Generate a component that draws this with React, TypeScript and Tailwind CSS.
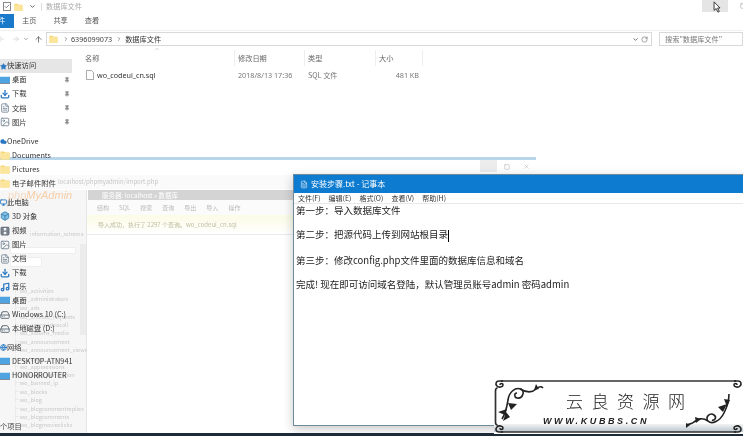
import React from "react";
import { ArrowLeft, ArrowRight, ArrowUp, ChevronDown, ChevronRight, ChevronUp, RotateCw, Pin, Star, Download, FileText, Image, Cloud, Monitor, Box, Film, Music, HardDrive, Globe, Check, Square, X } from "lucide-react";

const font = { fontFamily: '"Noto Sans CJK SC","Noto Sans",sans-serif' };

function FolderIcon({ className = "" }: { className?: string }) {
  return (
    <svg viewBox="0 0 10 10" className={className}>
      <path d="M0.5 1.5h3.5l1 1h4.5v7h-9z" fill="#f7d673" />
      <path d="M0.5 3h9v6.5h-9z" fill="#fbe49c" />
    </svg>
  );
}

function Screen({ className = "" }: { className?: string }) {
  return (
    <svg viewBox="0 0 12 10" className={className}>
      <rect x="0" y="0.5" width="12" height="7.5" fill="#4fa3e0" />
      <rect x="0" y="8" width="12" height="1.2" fill="#7d8b96" />
    </svg>
  );
}

type Row = { icon: React.ReactNode; label: string; pin?: boolean; head?: boolean; active?: boolean; gapTop?: string };

const sideRows: Row[] = [
  { icon: <Star className="w-[7px] h-[7px] fill-[#2b79c2] text-[#2b79c2]" />, label: "快速访问", head: true, active: true },
  { icon: <Screen className="w-[10px] h-[9px]" />, label: "桌面", pin: true },
  { icon: <Download className="w-[10px] h-[10px] text-[#2b79c2]" strokeWidth={3} />, label: "下载", pin: true },
  { icon: <FileText className="w-[10px] h-[10px] text-[#6d8192]" />, label: "文档", pin: true },
  { icon: <Image className="w-[10px] h-[10px] text-[#6d8192]" />, label: "图片", pin: true },
  { icon: <Cloud className="w-[7px] h-[7px] fill-[#2b79c2] text-[#2b79c2]" />, label: "OneDrive", head: true, gapTop: "mt-[5px]" },
  { icon: <FolderIcon className="w-[10px] h-[10px]" />, label: "Documents" },
  { icon: <FolderIcon className="w-[10px] h-[10px]" />, label: "Pictures" },
  { icon: <FolderIcon className="w-[10px] h-[10px]" />, label: "电子邮件附件" },
  { icon: <Monitor className="w-[7px] h-[7px] text-[#2b79c2]" strokeWidth={3} />, label: "此电脑", head: true, gapTop: "mt-[5px]" },
  { icon: <Box className="w-[10px] h-[10px] fill-[#7cc0e8] text-[#3b7ea8]" />, label: "3D 对象" },
  { icon: <Film className="w-[10px] h-[10px] text-[#6b7480]" strokeWidth={3} />, label: "视频" },
  { icon: <Image className="w-[10px] h-[10px] text-[#6d8192]" />, label: "图片" },
  { icon: <FileText className="w-[10px] h-[10px] text-[#6d8192]" />, label: "文档" },
  { icon: <Download className="w-[10px] h-[10px] text-[#2b79c2]" strokeWidth={3} />, label: "下载" },
  { icon: <Music className="w-[10px] h-[10px] text-[#2b79c2]" strokeWidth={3} />, label: "音乐" },
  { icon: <Screen className="w-[10px] h-[9px]" />, label: "桌面" },
  { icon: <HardDrive className="w-[10px] h-[10px] text-[#4b5b68]" />, label: "Windows 10 (C:)" },
  { icon: <HardDrive className="w-[10px] h-[10px] text-[#4b5b68]" />, label: "本地磁盘 (D:)" },
  { icon: <Globe className="w-[7px] h-[7px] text-[#2b79c2]" strokeWidth={3} />, label: "网络", head: true, gapTop: "mt-[5px]" },
  { icon: <Screen className="w-[10px] h-[9px]" />, label: "DESKTOP-ATN941" },
  { icon: <Screen className="w-[10px] h-[9px]" />, label: "HONORROUTER" },
];

const treeItems: [number, string][] = [
  [292, "wo_activities"],
  [300, "wo_administrators"],
  [309, "wo_ads"],
  [318, "wo_affiliate_requests"],
  [326, "wo_agoravideocall"],
  [334, "wo_albums_media"],
  [343, "wo_announcement"],
  [351, "wo_announcement_views"],
  [360, "wo_apps"],
  [368, "wo_appssessions"],
  [376, "wo_apps_permission"],
  [384, "wo_banned_ip"],
  [393, "wo_blocks"],
  [401, "wo_blog"],
  [410, "wo_blogcommentreplies"],
  [418, "wo_blogcomments"],
  [426, "wo_blogmovieclicks"],
];

function Stamp() {
  return (
    <div className="absolute left-[494px] top-[379px] w-[249px] h-[55px] bg-white z-30 overflow-hidden">
      <div className="absolute left-0 right-0 bottom-[2px] h-[8px] bg-gradient-to-b from-[#f2f4f5] to-[#b8c4cc]" />
      <svg viewBox="0 0 249 55" className="absolute inset-0 w-full h-full">
        {/* frame */}
        <path d="M7 2H242M7 53H242M1.500 12V43" fill="none" stroke="#333" strokeWidth="1.7" />
        {/* corner curls */}
        <path d="M9 2H5C2 2 1 5 3 7c2 2 6 1 6-1 0-2-3-2-3 0M1.500 12c0-2 1-3 2-3" fill="none" stroke="#222" strokeWidth="1.6" />
        <path d="M9 53H5c-3 0-4-3-2-5s6-1 6 1c0 2-3 2-3 0M1.500 43c0 2 1 3 2 3" fill="none" stroke="#222" strokeWidth="1.6" />
        <path d="M240 2h4c3 0 4 3 2 5s-6 1-6-1c0-2 3-2 3 0" fill="none" stroke="#222" strokeWidth="1.6" />
        <path d="M240 53h4c3 0 4-3 2-5s-6-1-6 1c0 2 3 2 3 0" fill="none" stroke="#222" strokeWidth="1.6" />
        {/* left ornament */}
        <path d="M8 40C12 34 13 27 14 21 15 13 21 8 27 10 31 12 29 20 23 19 20 18 20 14 23 14" fill="none" stroke="#222" strokeWidth="1.6" />
        <path d="M26 10C33 14 38 14 42 10 44 8 47 7 49 9" fill="none" stroke="#222" strokeWidth="1.7" />
        <path d="M14 24l9 1-6 6zM13 30l-9 3 7 3zM12 33l-3 9 7-4zM40 11l2-6 3 5z" fill="#222" />
        {/* right ornament */}
        <path d="M235 15C235 24 232 30 230 34 226 42 218 46 214 42 211 38 216 33 220 36 223 38 221 42 218 41" fill="none" stroke="#222" strokeWidth="1.6" />
        <path d="M214 42C208 38 204 40 200 43 198 45 195 45 193 46" fill="none" stroke="#222" strokeWidth="1.7" />
        <path d="M233 25l-9 3 5 5zM236 21l-6-1 3 8zM207 40l-6-2 1 6zM196 46l-4-2 0 5z" fill="#222" />
      </svg>
      <div className="absolute left-[72px] top-[11px] text-[#222] text-[17px] leading-[22px] tracking-[8.5px] whitespace-nowrap" style={{ fontFamily: '"Noto Sans CJK JP","Noto Sans CJK SC",sans-serif', fontWeight: 300 }}>云良资源网</div>
      <div className="absolute left-[49px] top-[36px] text-[#222] text-[9px] leading-[12px] tracking-[2.6px] italic font-bold whitespace-nowrap" style={{ fontFamily: '"Liberation Sans",sans-serif' }}>WWW.KUBBS.CN</div>
    </div>
  );
}

export default function App() {
  return (
    <div className="relative w-[743px] h-[436px] bg-white overflow-hidden blur-[0.35px]" style={font}>
      {/* Explorer */}
      <div className="flex flex-col h-[433px] text-[#555]">
        <div className="h-[13px] flex items-center pl-[3px] gap-[3px] shrink-0">
          <Check className="w-[8px] h-[9px] text-[#666] border border-[#888]" strokeWidth={3} />
          <FolderIcon className="w-[9px] h-[10px]" />
          <ChevronDown className="w-[7px] h-[7px] text-[#555] ml-[3px]" strokeWidth={3} />
          <div className="w-px h-[8px] bg-[#ddd] ml-[2px]" />
          <span className="ml-[1px] text-[7.2px] leading-none text-[#aaa]">数据库文件</span>
          <div className="ml-auto -mr-[3px] flex items-start self-start gap-[12px]">
            <div className="w-[26px] h-[12px] bg-[#e5e5e5]" />
            <Square className="w-[6px] h-[6px] mt-[3px] text-[#999]" />
          </div>
        </div>
        <div className="h-[15px] flex items-center text-[7.2px] leading-none shrink-0">
          <div className="w-[14px] h-[14px] bg-[#1a79c9] text-white flex items-center overflow-hidden"><span className="-ml-[2px]">件</span></div>
          <span className="ml-[8px] text-[#555]">主页</span>
          <span className="ml-[17px] text-[#555]">共享</span>
          <span className="ml-[17px] text-[#555]">查看</span>
        </div>
        <div className="h-[3px] border-b border-[#f0f0f0] shrink-0" />
        <div className="h-[14px] mt-[1px] flex items-center shrink-0">
          <ArrowLeft className="w-[8px] h-[8px] ml-[-3px] text-[#ccc]" />
          <ArrowRight className="w-[8px] h-[8px] ml-[7px] text-[#ccc]" />
          <ChevronDown className="w-[6px] h-[6px] ml-[3px] text-[#888]" strokeWidth={3} />
          <ArrowUp className="w-[9px] h-[9px] ml-[5px] text-[#555]" />
          <div className="ml-[3px] w-[606px] h-[14px] border border-[#d9d9d9] flex items-center text-[7.2px] text-[#444]">
            <FolderIcon className="w-[9px] h-[10px] ml-[2px]" />
            <ChevronRight className="w-[6px] h-[6px] ml-[5px] text-[#777]" strokeWidth={3} />
            <span className="ml-[2px]" style={{ fontFamily: '"Noto Sans",sans-serif' }}>6396099073</span>
            <ChevronRight className="w-[6px] h-[6px] ml-[4px] text-[#777]" strokeWidth={3} />
            <span className="ml-[3px] text-[#333]">数据库文件</span>
            <ChevronDown className="w-[7px] h-[7px] ml-auto mr-[2px] text-[#666]" strokeWidth={3} />
            <RotateCw className="w-[7px] h-[7px] mr-[3px] text-[#666]" />
          </div>
          <div className="ml-[7px] flex-1 h-[14px] border border-[#d9d9d9] flex items-center pl-[5px] text-[7.2px] text-[#777]">搜索"数据库文件"</div>
        </div>
        <div className="flex flex-1 min-h-0 relative">
          <div className="w-[72px] shrink-0 relative z-10 text-[7.3px] text-[#333] mt-[13px]">
            {sideRows.map((r, i) => (
              <div key={i} className={`h-[14.05px] flex items-center ${r.gapTop ?? ""} ${r.active ? "bg-[#e6e6e6]" : ""}`}>
                <span className={`shrink-0 ${r.head ? "-ml-[2px] mr-[-1px]" : "mr-[2px]"} w-[10px] flex justify-center`}>{r.icon}</span>
                <span className="whitespace-nowrap leading-none">{r.label}</span>
                {r.pin && <Pin className="w-[6px] h-[6px] ml-auto mr-[2px] text-[#888] fill-[#888]" />}
              </div>
            ))}
          </div>
          <div className="flex-1 pl-[13px] pt-[4px] relative">
            <ChevronUp className="absolute left-[82px] top-0 w-[6px] h-[6px] text-[#aaa]" />
            <div className="flex h-[16px] text-[7.2px] text-[#666] items-center">
              <div className="w-[149px]">名称</div>
              <div className="w-[70px] h-full border-l border-[#eee] flex items-center pl-[3px]">修改日期</div>
              <div className="w-[71px] h-full border-l border-[#eee] flex items-center pl-[3px]">类型</div>
              <div className="w-[48px] h-full border-x border-[#eee] flex items-center pl-[3px]">大小</div>
            </div>
            <div className="flex h-[15px] mt-[2px] items-center text-[7.2px] text-[#777]">
              <div className="w-[149px] flex items-center pl-[1px] text-[#333]" style={{ fontFamily: '"Noto Sans",sans-serif' }}>
                <svg viewBox="0 0 8 10" className="w-[8px] h-[10px] mr-[3px]"><path d="M.5.5h5l2 2v7h-7z" fill="#fff" stroke="#888" strokeWidth=".7" /></svg>
                wo_codeui_cn.sql
              </div>
              <div className="w-[70px] pl-[4px] whitespace-nowrap" style={{ fontFamily: '"Noto Sans",sans-serif' }}>2018/8/13 17:36</div>
              <div className="w-[71px] pl-[4px]">SQL 文件</div>
              <div className="w-[44px] text-right" style={{ fontFamily: '"Noto Sans",sans-serif' }}>481 KB</div>
            </div>
          </div>
        </div>
      </div>

      {/* phpMyAdmin browser window behind the notepad */}
      <div className="absolute left-0 top-[157px] w-[536px] h-[276px] border-t-[3px] border-[#b9d5ea] bg-white flex flex-col">
        <div className="h-[13px] flex items-center justify-end shrink-0">
          <div className="w-[17px] h-[12px] bg-[#ececec] mr-[7px] -mt-[1px]" />
          <Square className="w-[6px] h-[6px] text-[#aaa] mr-[13px]" />
          <X className="w-[7px] h-[7px] text-[#bbb] mr-[6px]" />
        </div>
        <div className="h-[14px] bg-[#fafafa] pl-[58px] text-[6px] leading-[14px] text-[#c6c6c6] shrink-0 mt-[2px]">localhost/phpmyadmin/import.php</div>
        <div className="flex flex-1 min-h-0 mt-[1px]">
          <div className="w-[87px] bg-[#f6f6f6] border-r border-[#e6e6e6] relative shrink-0">
            <div className="absolute right-0 top-[54px] w-[6px] h-[91px] bg-[#ececec]" />
            <div className="absolute left-[8px] top-[-2px] text-[11px] leading-[14px] whitespace-nowrap italic text-[#f8dcc2]" style={{ fontFamily: '"Liberation Sans",sans-serif' }}>php<span className="text-[#f6cda6]">MyAdmin</span></div>
            <div className="absolute left-[30px] top-[41px] text-[5.5px] leading-[7px] text-[#c9c9c9]">information_schema</div>
            <div className="absolute left-[10px] top-[57px] w-[66px] h-[7px] bg-white border border-[#eee]" />
            <div className="absolute left-[10px] top-[67px] w-[32px] h-[10px] bg-white border border-[#eee]" />
          </div>
          <div className="flex-1">
            <div className="h-[10px] bg-[#d4d4d4] text-[6.5px] leading-[10px] text-white pl-[14px] ml-[1px]">服务器: localhost » 数据库</div>
            <div className="h-[15px] flex items-center gap-[10px] pl-[10px] text-[6px] text-[#bbb] bg-[#fbfbfb]">
              <span>结构</span><span>SQL</span><span>搜索</span><span>查询</span><span>导出</span><span>导入</span><span>操作</span>
            </div>
            <div className="h-[20px] bg-gradient-to-b from-[#fbfbe6] to-white border-b border-[#e8ebf0] flex items-center pl-[11px] text-[6px] text-[#bdbda0]">导入成功，执行了 2297 个查询。wo_codeui_cn.sql</div>
          </div>
        </div>
      </div>

      {/* Faint tree of database tables */}
      <div className="absolute inset-0 pointer-events-none">
        {treeItems.map(([y, t]) => (
          <div key={y} className="absolute left-[13px] text-[5.5px] leading-[7px] text-[#c9c9c9] whitespace-nowrap" style={{ top: y - 4 }}>
            ├ {t}
          </div>
        ))}
        <div className="absolute left-0 top-[421px] z-10 text-[7.3px] leading-[10px] text-[#444] whitespace-nowrap">个项目</div>
      </div>

      {/* Notepad */}
      <div className="absolute left-[293px] top-[174px] w-[452px] h-[252px] border border-[#6f8a9d] bg-white z-20 flex flex-col shadow-[0_3px_10px_rgba(0,0,0,0.22)]">
        <div className="h-[18px] bg-[#0c7bd0] flex items-center pl-[6px] text-white text-[8px] shrink-0">
          <FileText className="w-[8px] h-[9px] text-[#dbe9f4] mr-[3px]" />
          安装步骤.txt - 记事本
        </div>
        <div className="h-[11px] flex items-center gap-[8px] pl-[4px] text-[7px] text-[#333] border-b border-[#e8e8e8] shrink-0 whitespace-nowrap">
          <span>文件(F)</span><span>编辑(E)</span><span>格式(O)</span><span>查看(V)</span><span>帮助(H)</span>
        </div>
        <div className="pl-[2px] text-[9.500px] leading-[12.2px] text-[#222] whitespace-pre-line">
          {"第一步：导入数据库文件\n\n第二步：把源代码上传到网站根目录"}
          <span className="inline-block w-px h-[12px] bg-black align-middle" />
          {"\n\n第三步：修改config.php文件里面的数据库信息和域名\n\n完成! 现在即可访问域名登陆，默认管理员账号admin 密码admin"}
        </div>
      </div>

      <Stamp />

      {/* Mouse cursor */}
      <svg viewBox="0 0 10 14" className="absolute left-[713px] top-[1px] w-[9px] h-[12px] z-40">
        <path d="M1 1v10l2.500-2.200L5.500 13l1.600-.8-2-4H8z" fill="#fff" stroke="#222" strokeWidth="1" />
      </svg>

      {/* Taskbar */}
      <div className="absolute left-0 right-0 bottom-0 h-[3px] bg-[#1d2b38] z-20" />
    </div>
  );
}
